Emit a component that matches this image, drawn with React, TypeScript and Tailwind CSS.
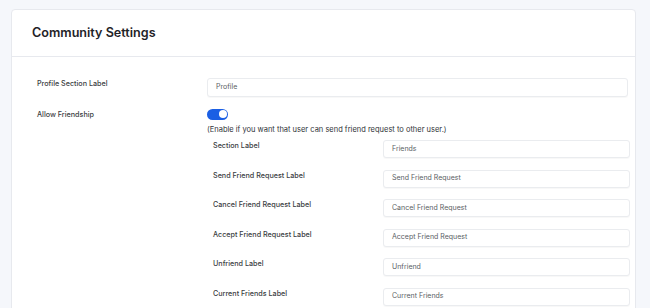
const friendFields = [
  { label: "Section Label", value: "Friends" },
  { label: "Send Friend Request Label", value: "Send Friend Request" },
  { label: "Cancel Friend Request Label", value: "Cancel Friend Request" },
  { label: "Accept Friend Request Label", value: "Accept Friend Request" },
  { label: "Unfriend Label", value: "Unfriend" },
  { label: "Current Friends Label", value: "Current Friends" },
];

function TextInput({ value, className }: { value: string; className: string }) {
  return (
    <div
      className={`flex items-center rounded-[3px] border border-[#eaecef] bg-white pl-[8px] text-[7px] text-[#5a5e64] shadow-[0_1px_1px_rgba(0,0,0,0.03)] ${className}`}
    >
      {value}
    </div>
  );
}

export default function App() {
  return (
    <div
      className="h-[308px] w-[650px] overflow-hidden bg-[#f5f7fb] pl-[11px] pt-[9px]"
      style={{ fontFamily: "Inter, 'Liberation Sans', sans-serif" }}
    >
      <div className="w-[625px] rounded-[4px] border border-[#e7e9ee] bg-white">
        <div className="flex h-[47px] items-center border-b border-[#e7e9ee] px-[20px]">
          <h1 className="text-[12.6px] font-semibold text-[#1f2328]">Community Settings</h1>
        </div>

        <div className="pb-[20px] pl-[25px] pr-[7px] pt-[21px]">
          <div className="flex items-start">
            <label className="w-[170px] text-[7.2px] font-medium leading-[12px] text-[#3a3d42]">
              Profile Section Label
            </label>
            <TextInput value="Profile" className="h-[19px] flex-1" />
          </div>

          <div className="mt-[11.5px] flex items-start">
            <label className="w-[170px] text-[7.2px] font-medium leading-[11px] text-[#3a3d42]">
              Allow Friendship
            </label>
            <div className="flex-1">
              <div className="flex h-[11px] w-[21px] items-center justify-end rounded-full bg-[#1b5fe4] pr-[1.5px]">
                <div className="h-[8px] w-[8px] rounded-full bg-white" />
              </div>
              <p className="mt-[4px] text-[7.5px] leading-[11px] text-[#2f3237]">
                (Enable if you want that user can send friend request to other user.)
              </p>
              <div className="mt-[5.5px] flex flex-col gap-[11.5px] pl-[6px]">
                {friendFields.map((f) => (
                  <div key={f.label} className="flex items-start">
                    <label className="w-[170px] text-[7.2px] font-medium leading-[12px] text-[#3a3d42]">
                      {f.label}
                    </label>
                    <TextInput value={f.value} className="mr-[-2px] h-[18px] flex-1" />
                  </div>
                ))}
              </div>
            </div>
          </div>
        </div>
      </div>
    </div>
  );
}
